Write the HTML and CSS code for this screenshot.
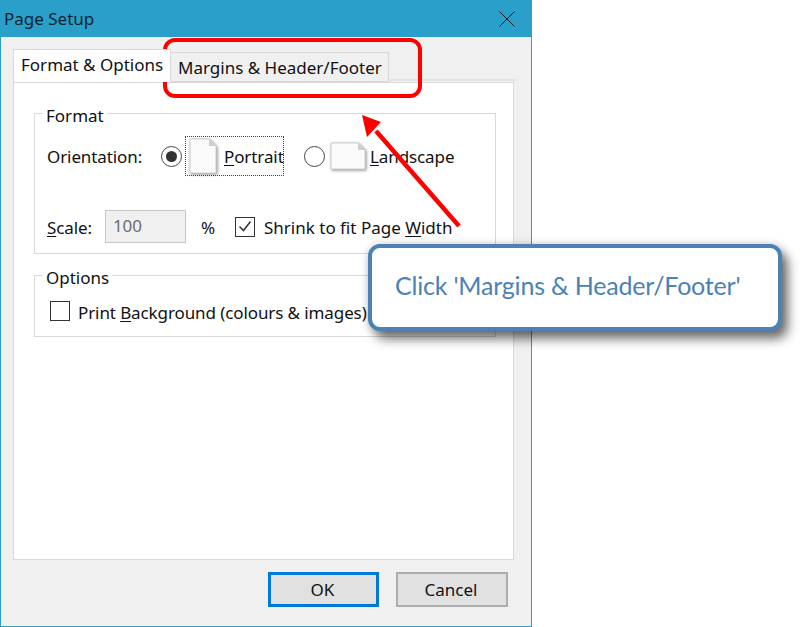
FILE: index.html
```html
<!DOCTYPE html>
<html lang="en">
<head>
<meta charset="utf-8">
<title>Page Setup</title>
<link rel="stylesheet" href="styles.css">
</head>
<body>
<div class="window">
  <div class="titlebar">
    <span class="title">Page Setup</span>
    <svg class="close" width="16" height="16" viewBox="0 0 16 16"><path d="M.5.5l15 15M15.500.5l-15 15" stroke="#1a1a1a" stroke-width="1" fill="none"/></svg>
  </div>
  <div class="tabs">
    <div class="tab tab-active">Format &amp; Options</div>
    <div class="tab tab-idle">Margins &amp; Header/Footer</div>
    <div class="tab-rest"></div>
  </div>
  <div class="panel">
    <fieldset class="group group-format">
      <legend>Format</legend>
      <div class="row row-orient">
        <span class="orient-label txt">Orientation:</span>
        <span class="radio radio-on"></span>
        <span class="focus">
          <svg class="page" width="28" height="36" viewBox="0 0 28 36"><path d="M1 1h19l7 7v27H1z" fill="#fafafa" stroke="#d0d0d0"/><path d="M20 1v7h7z" fill="#cfcfcf"/></svg>
          <span class="txt"><u>P</u>ortrait</span>
        </span>
        <span class="radio"></span>
        <span class="land">
          <svg class="page" width="36" height="28" viewBox="0 0 36 28"><path d="M1 1h27l7 7v19H1z" fill="#fafafa" stroke="#d0d0d0"/><path d="M28 1v7h7z" fill="#cfcfcf"/></svg>
          <span class="txt"><u>L</u>andscape</span>
        </span>
      </div>
      <div class="row row-scale">
        <span class="scale-label txt"><u>S</u>cale:</span>
        <span class="input">100</span>
        <span class="pct txt">%</span>
        <span class="check">
          <svg width="20" height="20" viewBox="0 0 20 20"><path d="M4.500 10.500l4 4 7-9" stroke="#333" stroke-width="1.500" fill="none"/></svg>
        </span>
        <span class="txt shrink">Shrink to fit Page <u>W</u>idth</span>
      </div>
    </fieldset>
    <fieldset class="group group-options">
      <legend>Options</legend>
      <div class="row row-print">
        <span class="check"></span>
        <span class="txt print">Print <u>B</u>ackground (colours &amp; images)</span>
      </div>
    </fieldset>
  </div>
  <div class="footer">
    <button class="btn btn-default">OK</button>
    <button class="btn">Cancel</button>
  </div>
</div>
<div class="highlight"></div>
<svg class="arrow" width="120" height="130" viewBox="0 0 120 130"><path d="M99 112L16 17" stroke="#f00" stroke-width="4.500" fill="none"/><path d="M2 1l19 7-14 15z" fill="#f00"/></svg>
<div class="callout">Click 'Margins &amp; Header/Footer'</div>
</body>
</html>
```
FILE: styles.css
```css
* { box-sizing: border-box; }
html, body { margin: 0; height: 100%; background: #fff; overflow: hidden; }
body { font-family: "Noto Sans", sans-serif; font-size: 17px; line-height: 24px; color: #111; position: relative; }
u { text-underline-offset: 2px; }

.window { width: 532px; height: 627px; background: #f0f0f0; border: 1px solid #2a9fca; border-top: 0; display: flex; flex-direction: column; }
.titlebar { height: 37px; background: #2a9fca; display: flex; align-items: center; justify-content: space-between; padding: 0 16px 0 3px; flex: none; }
.title { color: #0c2430; }

.tabs { display: flex; margin: 12px 14px 0 12px; height: 33px; align-items: flex-start; flex: none; }
.tab { white-space: nowrap; }
.tab-active { width: 158px; height: 33px; background: #fff; border: 1px solid #d9d9d9; border-bottom: 0; padding: 3px 0 0 7px; position: relative; z-index: 1; margin-bottom: -1px; }
.tab-idle { width: 218px; height: 30px; margin-top: 3px; background: #f0f0f0; border: 1px solid #d9d9d9; border-left: 0; padding: 3px 0 0 7px; }
.tab-rest { flex: 1; height: 2px; margin-top: 30px; background: #e3e3e3; }

.panel { flex: 1; margin: 0 17px 0 12px; background: #fff; border: 1px solid #d9d9d9; padding: 16px 17px 0 20px; }
.group { margin: 0; border: 1px solid #d9d9d9; padding: 0 0 0 12px; min-width: 0; }
.group legend { padding: 6px 3px 0; margin-left: -4px; line-height: 22px; }
.group-format { height: 155px; }
.group-options { height: 76px; margin-top: 7px; }

.row { display: flex; align-items: center; white-space: nowrap; letter-spacing: -0.1px; }
.txt { padding-top: 2px; }
.shrink { letter-spacing: 0; }
.print { padding-top: 3px; }
.row-orient { height: 40px; margin-top: 9px; }
.orient-label { width: 114px; }
.radio { width: 21px; height: 21px; flex: none; border: 1.500px solid #444; border-radius: 50%; display: flex; align-items: center; justify-content: center; background: #fff; }
.radio-on::after { content: ""; width: 11px; height: 11px; border-radius: 50%; background: #333; }
.focus { display: flex; align-items: center; gap: 7px; width: 99px; height: 40px; margin: 0 20px 0 3px; padding-left: 3px; border: 1px dotted #444; }
.land { display: flex; align-items: center; gap: 4px; margin-left: 5px; }
.page { flex: none; filter: drop-shadow(1px 1px 1.500px rgba(0,0,0,.45)); }

.row-scale { height: 33px; margin-top: 34px; }
.scale-label { width: 58px; }
.input { width: 81px; height: 33px; background: #f0f0f0; border: 1px solid #c6c6c6; color: #6d6d6d; padding: 3px 0 0 7px; }
.pct { margin-left: 15px; width: 34px; }
.check { width: 20px; height: 20px; flex: none; border: 1.500px solid #333; background: #fff; margin-right: 9px; display: block; }
.check svg { display: block; margin: -1.500px; }
.row-print { height: 20px; margin: 12px 0 0 3px; }
.row-print .check { margin-right: 8px; }

.footer { height: 66px; flex: none; display: flex; padding: 12px 0 0 267px; gap: 17px; align-items: flex-start; }
.btn { width: 112px; height: 35px; background: #e1e1e1; border: 2px solid #adadad; font: inherit; color: #111; padding: 0 2px 0 0; }
.btn-default { width: 111px; border: 3px solid #0078d7; }

.highlight { position: absolute; left: 163px; top: 38px; width: 259px; height: 60px; border: 4px solid #f00; border-radius: 12px; }
.arrow { position: absolute; left: 360px; top: 114px; }
.callout { position: absolute; left: 368px; top: 244px; width: 414px; height: 87px; background: #fff; border: 4px solid #4a82b5; border-radius: 12px; box-shadow: 6px 8px 11px rgba(0,0,0,.55), 0 0 8px rgba(0,0,0,.18); color: #4a82b5; font-family: Lato, sans-serif; font-size: 25px; letter-spacing: -0.2px; display: flex; align-items: center; padding: 0 0 6px 23px; }
```
